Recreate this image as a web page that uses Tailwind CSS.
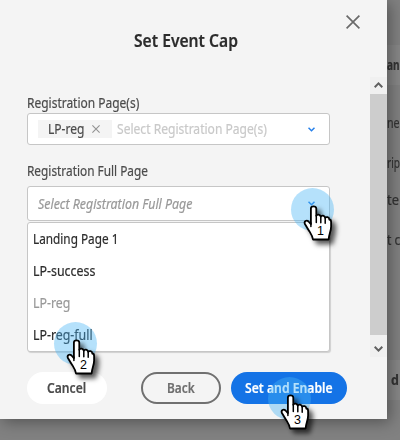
<!DOCTYPE html>
<html lang="en">
<head>
<meta charset="utf-8">
<title>Set Event Cap</title>
<script src="https://cdn.jsdelivr.net/npm/@tailwindcss/browser@4"></script>
</head>
<body class="relative h-[440px] w-[400px] overflow-hidden bg-[#818181] font-['Noto_Sans',sans-serif] text-[14px] leading-5 text-[#4b4b4b] [-webkit-text-stroke:0.2px]">

<!-- Page behind the dialog -->
<div class="flex h-full flex-col pl-[387px] whitespace-nowrap text-[#333]">
  <div class="-ml-4 mt-[45px] h-10 bg-[#878787] pt-[10px] pl-4 font-bold"><span data-fit="13">an</span></div>
  <div class="mt-7 h-5"><span data-fit="13">ne</span></div>
  <div class="mt-5 h-5"><span data-fit="13">rip</span></div>
  <div class="mt-[17px] h-5"><span data-fit="12">te</span></div>
  <div class="mt-5 h-5"><span data-fit="13">t c</span></div>
  <div class="-ml-4 mt-[110px] h-10 bg-[#878787] pt-[10px] pl-[20px] font-bold"><span data-fit="8">d</span></div>
</div>

<!-- Dialog -->
<main class="absolute top-0 left-0 h-[419px] w-[387px] bg-[#f4f4f4] shadow-[3px_3px_14px_rgba(0,0,0,0.36)]">
  <div class="flex h-[77px]">
    <h1 class="w-[346px] pt-[29px] pl-[134px] text-[17px] leading-6 font-semibold text-[#2c2c2c]"><span data-fit="104">Set Event Cap</span></h1>
    <svg class="mt-[15px] h-[14px] w-[14px] shrink-0" viewBox="0 0 14 14" fill="none" stroke="#6a6a6a" stroke-width="1.7"><path d="M.6.6l12.8 12.8M13.4.6L.6 13.4"/></svg>
  </div>

  <div class="flex h-[280px]">
    <section class="w-[370px] pl-[27px]">
      <div class="h-9 pt-4"><span data-fit="112">Registration Page(s)</span></div>
      <div class="flex h-8 w-[303px] items-center rounded-[3px] border border-[#c6c6c6] bg-white pl-[10px]">
        <div class="flex h-[18px] w-[74px] items-center bg-[#f4f4f4] pl-[10px]">
          <span class="w-11 pb-px"><span data-fit="36">LP-reg</span></span>
          <svg class="h-2 w-2" viewBox="0 0 8 8" fill="none" stroke="#929292" stroke-width="1.1"><path d="M.4.4l7.2 7.2M7.6.4L.4 7.6"/></svg>
        </div>
        <span class="ml-[5px] w-[191px] pb-px text-[#c9c9c9]"><span data-fit="150">Select Registration Page(s)</span></span>
        <svg class="h-[5px] w-[7px]" viewBox="0 0 7 5" fill="none" stroke="#2680eb" stroke-width="1.5"><path d="M.5.7l3 3 3-3"/></svg>
      </div>
      <div class="h-[41px] pt-4"><span data-fit="121">Registration Full Page</span></div>
      <div class="flex h-[35px] w-[303px] items-center rounded-[3px] border border-[#c6c6c6] bg-white pl-[10px]">
        <span class="w-[270px] text-[#999] italic"><span data-fit="154">Select Registration Full Page</span></span>
        <svg class="mb-px h-[5px] w-[7px]" viewBox="0 0 7 5" fill="none" stroke="#2680eb" stroke-width="1.5"><path d="M.5.7l3 3 3-3"/></svg>
      </div>
      <ul class="mt-px flex h-[130px] w-[303px] flex-col gap-3 rounded-[3px] border border-[#c6c6c6] bg-white pt-[6px] pl-[5px] text-[#2c2c2c] shadow-[1px_1px_1px_rgba(0,0,0,0.15)]">
        <li class="h-5"><span data-fit="85">Landing Page 1</span></li>
        <li class="h-5"><span data-fit="62">LP-success</span></li>
        <li class="h-5 text-[#999]"><span data-fit="37">LP-reg</span></li>
        <li class="h-5"><span data-fit="60">LP-reg-full</span></li>
      </ul>
    </section>
    <div class="flex w-[17px] flex-col bg-[#cdcdcd]">
      <div class="h-[17px] bg-[#f0f0f0] pt-[5px] pl-1"><svg class="h-[6px] w-[9px]" viewBox="0 0 9 6" fill="none" stroke="#606060" stroke-width="2"><path d="M.7 5.2L4.5 1.4l3.8 3.8"/></svg></div>
      <div class="h-[241px]"></div>
      <div class="h-[22px] bg-[#f0f0f0] pt-[11px] pl-1"><svg class="h-[6px] w-[9px]" viewBox="0 0 9 6" fill="none" stroke="#606060" stroke-width="2"><path d="M.7.8l3.8 3.8L8.3.8"/></svg></div>
    </div>
  </div>

  <footer class="flex h-[62px] pt-[15px] pl-[27px] font-semibold">
    <button class="h-8 w-20 rounded-full bg-white pl-5 text-left"><span data-fit="39">Cancel</span></button>
    <button class="ml-[34px] h-8 w-20 rounded-full border-2 border-[#707070] pl-6 text-left text-[#6e6e6e]"><span data-fit="28">Back</span></button>
    <button class="ml-[10px] h-8 w-[116px] rounded-full bg-[#1473e6] pl-[14px] text-left text-white"><span data-fit="88">Set and Enable</span></button>
  </footer>
</main>

<!-- Step markers -->
<svg class="pointer-events-none absolute inset-0 h-[440px] w-[400px]" viewBox="0 0 400 440">
  <defs>
    <filter id="soft" x="-50%" y="-50%" width="220%" height="220%"><feDropShadow dx="4" dy="4" stdDeviation="2.5" flood-color="#000" flood-opacity=".65"/></filter>
    <g id="pointer">
      <circle r="21.5" fill="#46b4f5" fill-opacity=".4"/>
      <path filter="url(#soft)" d="M-1.6 14V-1Q-1.6-3.2 1-3.2T3.8-1V6.3Q4.3 5 6 5.2T8.3 7.2Q9 5.8 10.6 6.1T12.7 8.3Q13.6 7.2 15.2 7.7T16.8 10Q18.6 10 18.6 12.5V17C18.6 22 16.6 24 16.1 30H.5C.2 26.5-1.8 24-3.5 21.2L-7.6 14.5C-8.8 11.9-5.9 10.1-4 12L-1.6 14.6Z" fill="#fff" stroke="#000" stroke-width="1.8" stroke-linejoin="round"/>
      <path d="M3.8 6V13M8.3 7V13.2M12.7 8.3V13.8M-1.6 13.5V17" fill="none" stroke="#000" stroke-width="1.5" stroke-linecap="round"/>
    </g>
  </defs>
  <g font-family="Liberation Sans, sans-serif" font-size="12.5" text-anchor="middle" fill="#000">
    <g transform="translate(312.5 209.5)"><use href="#pointer"/><text x="8" y="25">1</text></g>
    <g transform="translate(75.5 343.5)"><use href="#pointer"/><text x="8" y="25">2</text></g>
    <g transform="translate(289.5 398.5)"><use href="#pointer"/><text x="8" y="25">3</text></g>
  </g>
</svg>

<script>
  function fitLabels() {
    for (const el of document.querySelectorAll('[data-fit]')) {
      el.style.display = 'inline-block';
      el.style.whiteSpace = 'nowrap';
      el.style.transformOrigin = '0 50%';
      el.style.transform = 'scaleX(' + el.dataset.fit / el.offsetWidth + ')';
    }
  }
  fitLabels();
  addEventListener('load', fitLabels);
  document.fonts.ready.then(fitLabels);
  new ResizeObserver(fitLabels).observe(document.querySelector('h1'));
</script>
</body>
</html>
